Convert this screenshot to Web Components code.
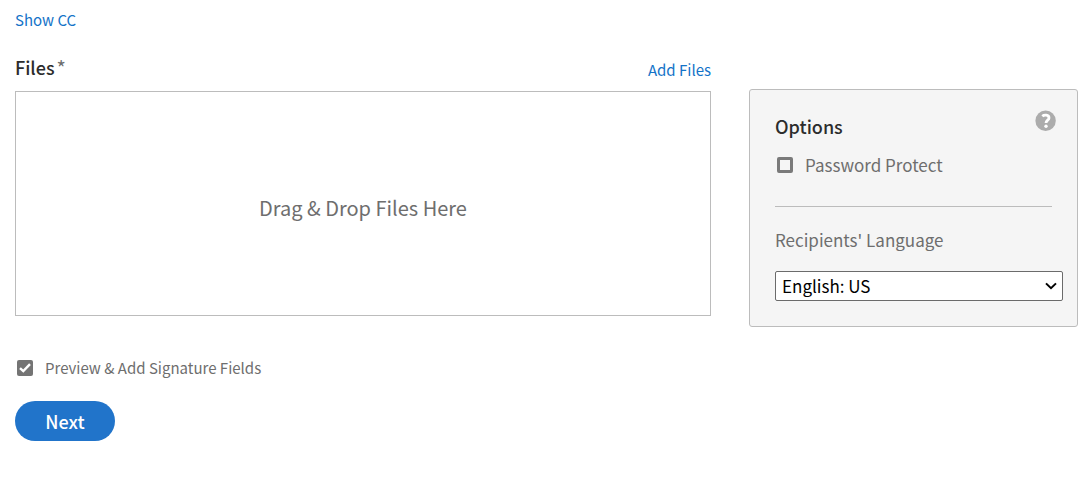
<!DOCTYPE html>
<html lang="en">
<head>
<meta charset="utf-8">
<meta name="viewport" content="width=device-width, initial-scale=1">
<title>Send files</title>
<style>
body {
  margin: 0;
  background: #fff;
  color: #6e6e6e;
  font-family: "Noto Sans CJK SC", "Noto Sans", sans-serif;
  font-size: 15px;
  line-height: 24px;
}
</style>
</head>
<body>
<send-page></send-page>

<script>
function define(name, html, setup) {
  customElements.define(name, class extends HTMLElement {
    constructor() {
      super();
      const template = document.createElement('template');
      template.innerHTML = html;
      this.attachShadow({ mode: 'open' }).append(template.content.cloneNode(true));
      if (setup) setup(this, this.shadowRoot);
    }
  });
}

define('text-link', `
<style>
:host { display: block; }
a { color: #1473c8; text-decoration: none; }
a:hover { text-decoration: underline; }
</style>
<a href="#"><slot></slot></a>`);

define('check-option', `
<style>
:host { display: block; }
label { display: flex; align-items: center; }
input {
  appearance: none;
  flex: none;
  box-sizing: border-box;
  width: 16px;
  height: 16px;
  margin: 0 12px 0 2px;
  border: 3px solid #7a7a7a;
  border-radius: 2px;
}
input:checked {
  border: 0;
  background: #747474 url("data:image/svg+xml,%3Csvg xmlns='http://www.w3.org/2000/svg' viewBox='0 0 12 12'%3E%3Cpath d='M1 6.2 4.3 9.2 11 2.2' fill='none' stroke='white' stroke-width='2.4'/%3E%3C/svg%3E") center / 12px no-repeat;
}
</style>
<label><input type="checkbox"><slot></slot></label>`,
(host, root) => { root.querySelector('input').checked = host.hasAttribute('checked'); });

define('help-button', `
<style>
:host { display: block; }
button { display: block; padding: 0; border: 0; background: none; cursor: pointer; }
svg { display: block; width: 22px; height: 22px; }
</style>
<button type="button" aria-label="Help">
<svg viewBox="0 0 22 22" aria-hidden="true">
<circle cx="10.6" cy="10.8" r="10.2" fill="#acacac"/>
<path d="M7.3 6.2C9 4.7 14 4.5 14 7.9C14 10.1 11 10.2 11 13" fill="none" stroke="#fff" stroke-width="2.8"/>
<circle cx="11" cy="16.3" r="1.7" fill="#fff"/>
</svg>
</button>`);

define('primary-button', `
<style>
:host { display: block; }
button {
  height: 40px;
  min-width: 100px;
  padding: 0 24px;
  border: 0;
  border-radius: 20px;
  background: #2174ca;
  color: #fff;
  font: 500 18px/24px "Noto Sans CJK SC", sans-serif;
  cursor: pointer;
}
</style>
<button type="button"><slot></slot></button>`);

define('file-drop', `
<style>
:host { display: block; }
header { display: flex; justify-content: space-between; align-items: flex-end; margin-bottom: 9px; }
h2 { display: flex; align-items: center; gap: 2px; margin: 0 0 3px; color: #2c2c2c; font-size: 18px; font-weight: 500; }
span { padding-top: 2px; color: #6e6e6e; font-size: 20px; font-weight: 400; line-height: 20px; }
section {
  display: flex;
  align-items: center;
  justify-content: center;
  box-sizing: border-box;
  min-height: 225px;
  padding-top: 8px;
  border: 1px solid #bcbcbc;
  font-size: 20px;
}
</style>
<header><h2>Files<span>*</span></h2><text-link>Add Files</text-link></header>
<section><slot></slot></section>`);

define('options-panel', `
<style>
:host {
  display: block;
  box-sizing: border-box;
  padding: 20px 14px 25px 25px;
  border: 1px solid #bcbcbc;
  border-radius: 3px;
  background: #f5f5f5;
  font-size: 17px;
}
header { display: flex; justify-content: space-between; align-items: flex-start; padding-right: 6px; }
h2 { margin: 4px 0 0; color: #2c2c2c; font-size: 18px; font-weight: 500; }
check-option { margin-top: 15px; }
hr { margin: 29px 11px 21px 0; border: 0; border-top: 1px solid #bcbcbc; }
label { display: block; margin-bottom: 19px; }
select {
  appearance: none;
  display: block;
  width: 100%;
  height: 30px;
  padding: 0 20px 0 6px;
  border: 1px solid #6b6b6b;
  border-radius: 2px;
  background: #fff url("data:image/svg+xml,%3Csvg xmlns='http://www.w3.org/2000/svg' viewBox='0 0 12 8'%3E%3Cpath d='M1 1.4 6 6.2 11 1.4' fill='none' stroke='black' stroke-width='2'/%3E%3C/svg%3E") right 5px center / 12px 8px no-repeat;
  color: #000;
  font: 17px/24px "Noto Sans CJK SC", sans-serif;
}
</style>
<header><h2>Options</h2><help-button></help-button></header>
<check-option>Password Protect</check-option>
<hr>
<label for="language">Recipients' Language</label>
<select id="language"><option>English: US</option></select>`);

define('send-page', `
<style>
:host { display: block; padding: 8px 13px 40px 15px; }
main { display: grid; grid-template-columns: minmax(0, 1fr) 329px; column-gap: 38px; align-items: start; margin-top: 23px; }
options-panel { margin-top: 34px; }
check-option { margin: 29px 0 21px; }
</style>
<text-link>Show CC</text-link>
<main>
<file-drop>Drag &amp; Drop Files Here</file-drop>
<options-panel></options-panel>
</main>
<footer>
<check-option checked>Preview &amp; Add Signature Fields</check-option>
<primary-button>Next</primary-button>
</footer>`);
</script>
</body>
</html>
